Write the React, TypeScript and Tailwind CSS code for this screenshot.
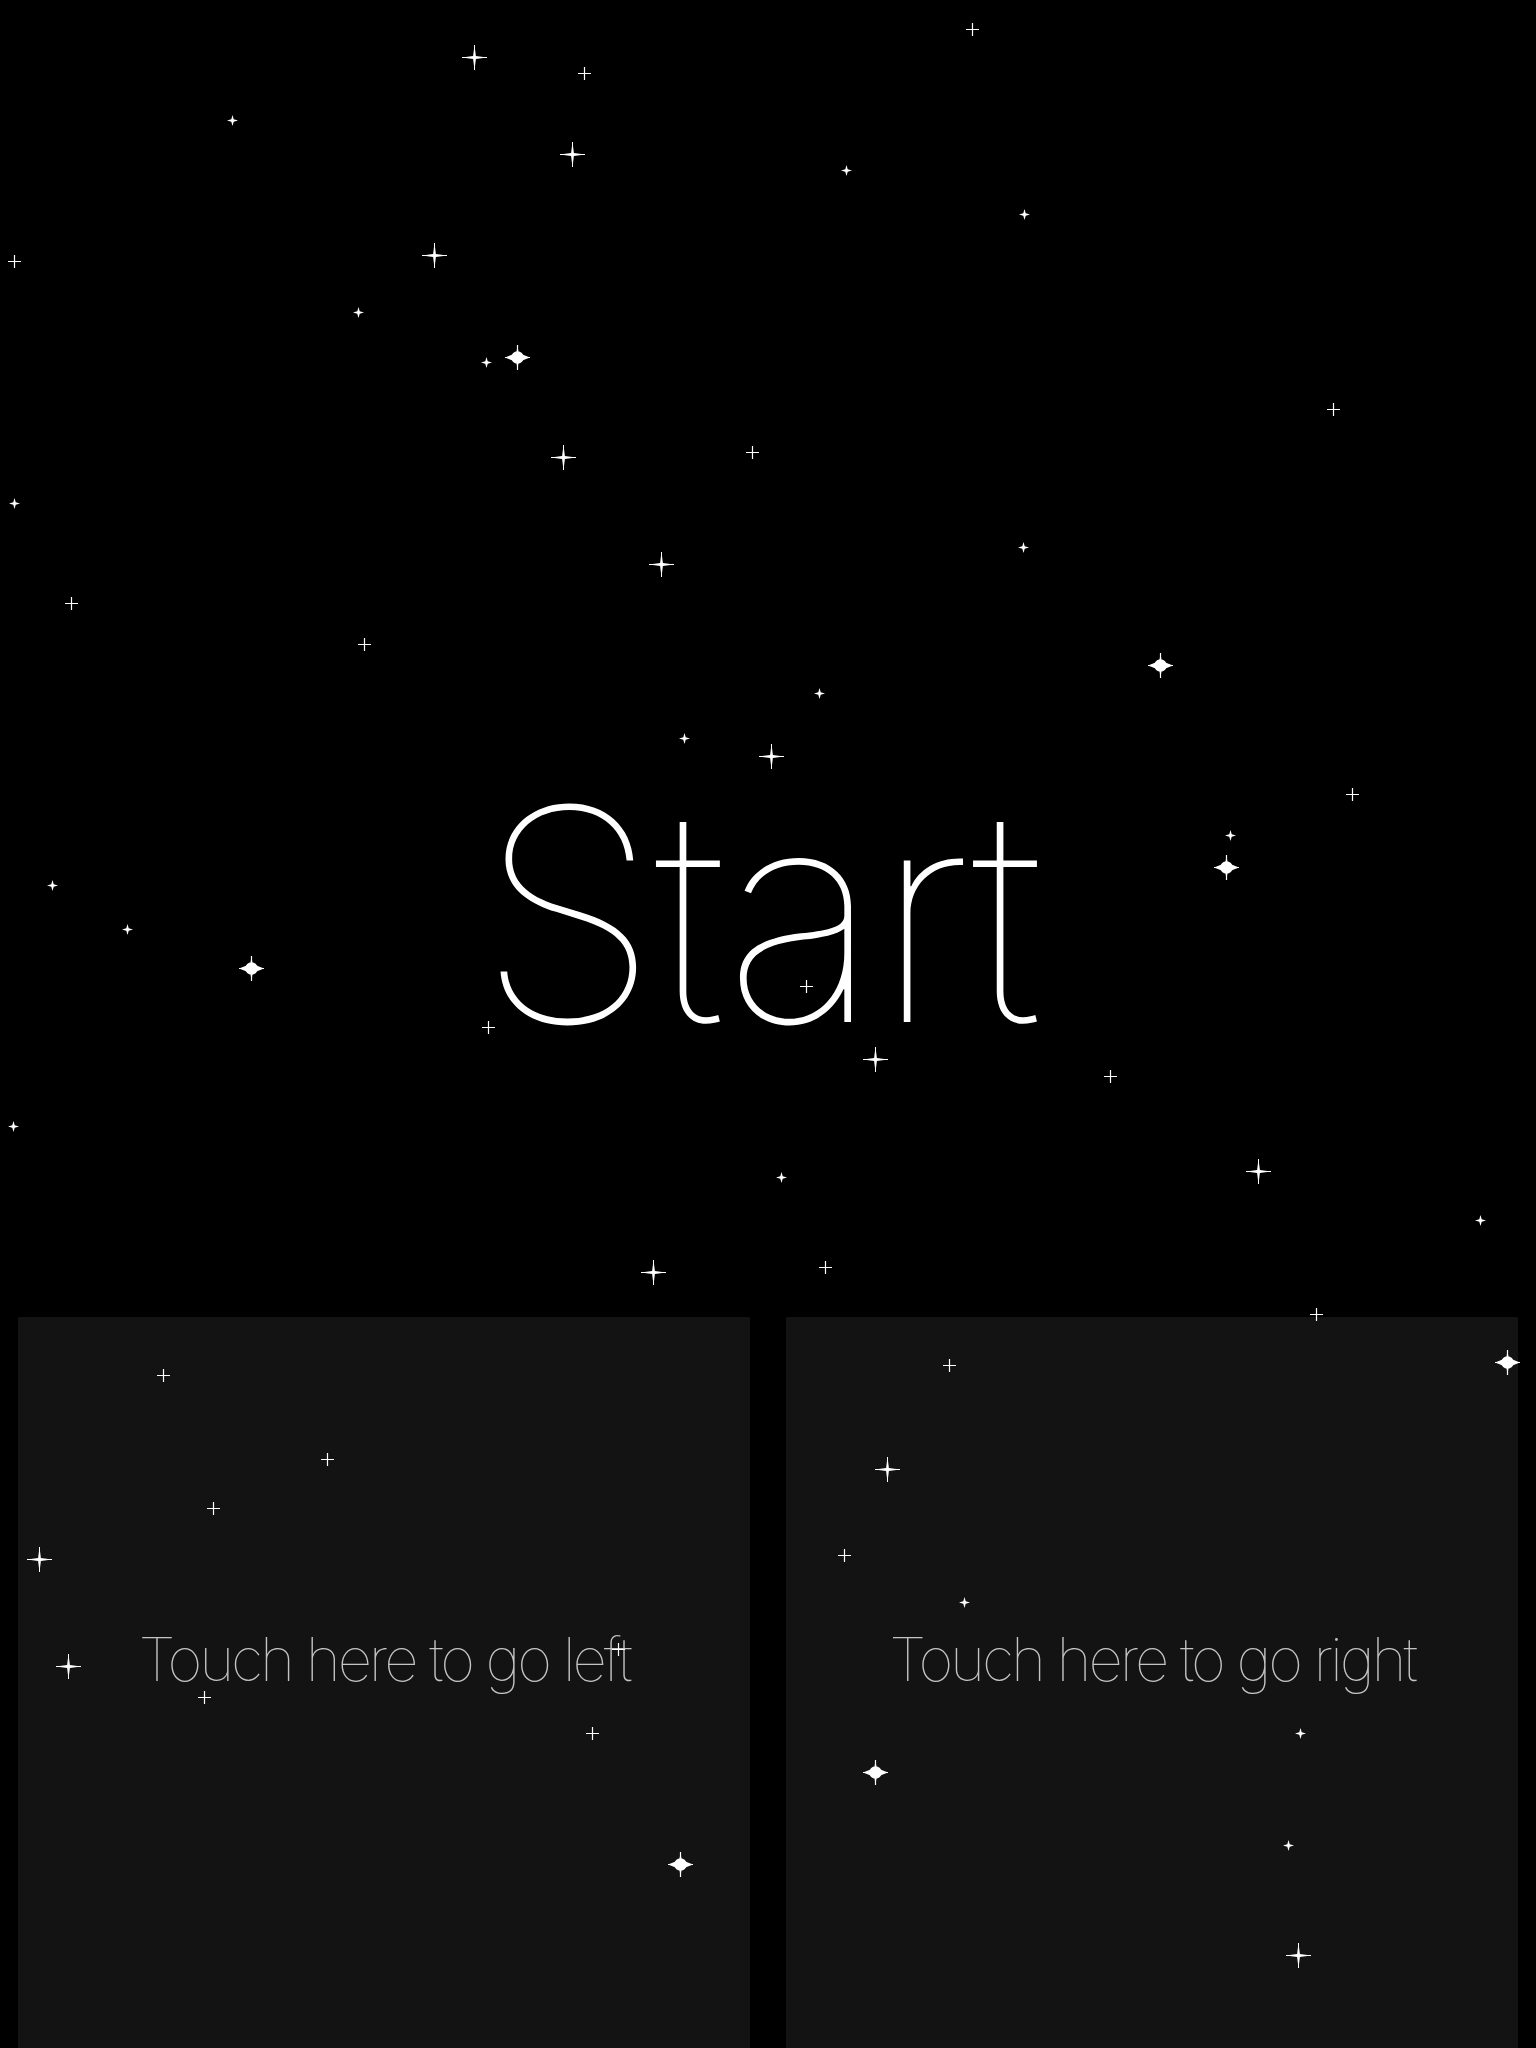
import React from "react";

type Kind = "p" | "P" | "s" | "b";

// star positions on the page (centre x, centre y, kind)
const stars: [number, number, Kind][] = [
  [972, 29, "p"], [474, 57, "P"], [584, 73, "p"], [232, 120, "s"], [572, 154, "P"],
  [846, 170, "s"], [1024, 214, "s"], [14, 261, "p"], [434, 255, "P"], [358, 312, "s"],
  [486, 362, "s"], [517, 357, "b"], [1333, 409, "p"], [563, 457, "P"], [752, 452, "p"],
  [14, 503, "s"], [661, 564, "P"], [1023, 547, "s"], [71, 603, "p"], [364, 644, "p"],
  [1160, 665, "b"], [819, 693, "s"], [684, 738, "s"], [771, 756, "P"], [1352, 794, "p"],
  [1230, 835, "s"], [1226, 867, "b"], [52, 885, "s"], [127, 929, "s"], [251, 968, "b"],
  [806, 986, "p"], [488, 1027, "p"], [875, 1059, "P"], [1110, 1076, "p"], [13, 1126, "s"],
  [1258, 1171, "P"], [781, 1177, "s"], [1480, 1220, "s"], [653, 1272, "P"], [825, 1267, "p"],
  [1316, 1314, "p"], [163, 1375, "p"], [949, 1365, "p"], [1507, 1362, "b"], [327, 1459, "p"],
  [213, 1508, "p"], [887, 1469, "P"], [39, 1559, "P"], [844, 1555, "p"], [964, 1602, "s"],
  [68, 1666, "P"], [204, 1697, "p"], [618, 1649, "p"], [592, 1733, "p"], [1300, 1733, "s"],
  [875, 1772, "b"], [680, 1864, "b"], [1288, 1845, "s"], [1298, 1955, "P"],
];

const sizes: Record<Kind, number> = { p: 13, P: 25, s: 11, b: 25 };

function Star({ kind }: { kind: Kind }) {
  if (kind === "p") {
    return (
      <svg width="13" height="13" viewBox="0 0 13 13">
        <path d="M6.5 0V13M0 6.5H13" stroke="white" strokeWidth="1.2" />
      </svg>
    );
  }
  if (kind === "P") {
    return (
      <svg width="25" height="25" viewBox="0 0 25 25">
        <path d="M12.5 0L13.9 11.1L25 12.5L13.9 13.9L12.5 25L11.1 13.9L0 12.5L11.1 11.1Z" fill="white" />
        <path d="M12.5 0V25M0 12.5H25" stroke="white" strokeWidth="1" />
      </svg>
    );
  }
  if (kind === "s") {
    return (
      <svg width="11" height="11" viewBox="0 0 11 11">
        <path d="M5.5 0L6.7 4.3L11 5.5L6.7 6.7L5.5 11L4.3 6.7L0 5.5L4.3 4.3Z" fill="white" />
      </svg>
    );
  }
  return (
    <svg width="25" height="25" viewBox="0 0 25 25">
      <circle cx="12.5" cy="12.5" r="6.2" fill="white" />
      <path d="M12.5 0L13.6 8L25 12.5L13.6 17L12.5 25L11.4 17L0 12.5L11.4 8Z" fill="white" />
      <path d="M12.5 0V25M0 12.5H25" stroke="white" strokeWidth="1.2" />
    </svg>
  );
}

export default function App() {
  return (
    <div className="relative w-[1536px] h-[2048px] overflow-hidden bg-black font-['Inter','Liberation_Sans',sans-serif]">
      {/* title */}
      <div className="h-[1317px] flex justify-center pt-[766px] pr-[20px]">
        <h1 className="text-[296px] leading-none font-thin text-white tracking-[-0.015em]">Start</h1>
      </div>

      {/* touch panels */}
      <div className="flex gap-[36px] px-[18px]">
        <div className="w-[732px] h-[731px] bg-[#131313] flex justify-center pt-[312px]">
          <span className="text-[60px] leading-none font-thin text-[#c4c4c4] tracking-[-0.052em]">
            Touch here to go left
          </span>
        </div>
        <div className="w-[732px] h-[731px] bg-[#131313] flex justify-center pt-[312px]">
          <span className="text-[60px] leading-none font-thin text-[#c4c4c4] tracking-[-0.052em]">
            Touch here to go right
          </span>
        </div>
      </div>

      {/* starfield over everything */}
      <div className="absolute inset-0 pointer-events-none">
        {stars.map(([x, y, k], i) => (
          <div
            key={i}
            className="absolute"
            style={{ left: x - sizes[k] / 2, top: y - sizes[k] / 2, width: sizes[k], height: sizes[k] }}
          >
            <Star kind={k} />
          </div>
        ))}
      </div>
    </div>
  );
}
